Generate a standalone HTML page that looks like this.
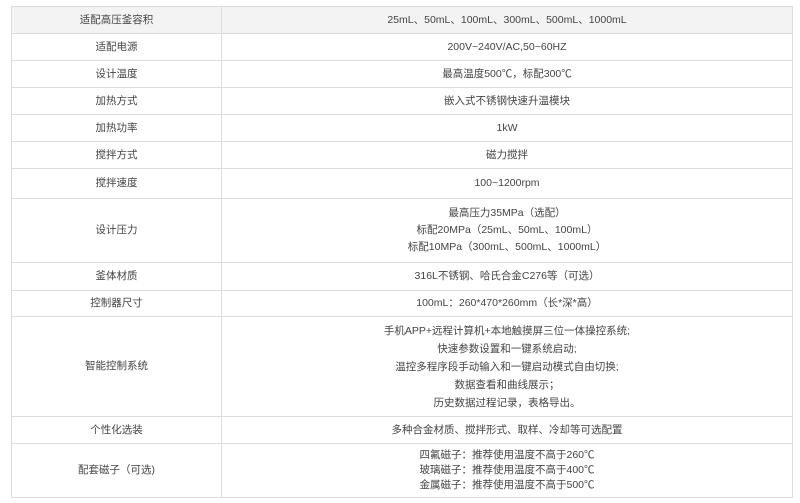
<!DOCTYPE html><html><head><meta charset="utf-8"><style>
body{margin:0;background:#fff;width:800px;height:503px;overflow:hidden;font-family:"Liberation Sans","Noto Sans CJK SC",sans-serif;font-size:10.5px;color:#444}
table{position:absolute;left:11px;top:6px;width:782px;border-collapse:collapse}
td{border:1px solid #dcdcdc;text-align:center;padding:0;line-height:17px}
td:first-child{width:209px}
tr.h td{background:#f3f3f3}
</style></head><body>
<table>
<tr class="h" style="height:27px"><td>适配高压釜容积</td><td>25mL、50mL、100mL、300mL、500mL、1000mL</td></tr>
<tr style="height:27px"><td>适配电源</td><td>200V~240V/AC,50~60HZ</td></tr>
<tr style="height:27px"><td>设计温度</td><td>最高温度500℃，标配300℃</td></tr>
<tr style="height:27px"><td>加热方式</td><td>嵌入式不锈钢快速升温模块</td></tr>
<tr style="height:27px"><td>加热功率</td><td>1kW</td></tr>
<tr style="height:27px"><td>搅拌方式</td><td>磁力搅拌</td></tr>
<tr style="height:30px"><td>搅拌速度</td><td>100~1200rpm</td></tr>
<tr style="height:64px"><td>设计压力</td><td>最高压力35MPa（选配）<br>标配20MPa（25mL、50mL、100mL）<br>标配10MPa（300mL、500mL、1000mL）</td></tr>
<tr style="height:28px"><td>釜体材质</td><td>316L不锈钢、哈氏合金C276等（可选）</td></tr>
<tr style="height:26px"><td>控制器尺寸</td><td>100mL：260*470*260mm（长*深*高）</td></tr>
<tr style="height:100px"><td>智能控制系统</td><td style="line-height:18px">手机APP+远程计算机+本地触摸屏三位一体操控系统;<br>快速参数设置和一键系统启动;<br>温控多程序段手动输入和一键启动模式自由切换;<br>数据查看和曲线展示；<br>历史数据过程记录，表格导出。</td></tr>
<tr style="height:27px"><td>个性化选装</td><td>多种合金材质、搅拌形式、取样、冷却等可选配置</td></tr>
<tr style="height:54px"><td>配套磁子（可选)</td><td style="line-height:15px">四氟磁子：推荐使用温度不高于260℃<br>玻璃磁子：推荐使用温度不高于400℃<br>金属磁子：推荐使用温度不高于500℃</td></tr>
</table>
</body></html>
